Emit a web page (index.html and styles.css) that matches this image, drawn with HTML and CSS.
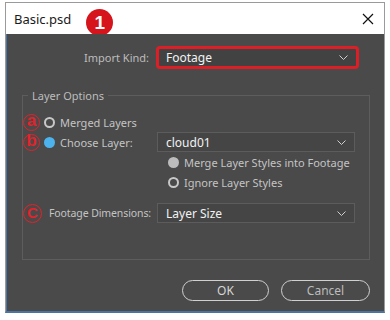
FILE: index.html
```html
<!DOCTYPE html>
<html lang="en">
<head>
    <meta charset="UTF-8">
    <meta name="viewport" content="width=device-width, initial-scale=1.0">
    <title>Basic.psd</title>
    <link rel="stylesheet" href="styles.css">
</head>
<body>
    <div class="window">
        <div class="titlebar">
            <span class="title">Basic.psd</span>
            <span class="step">1</span>
            <span class="close">
                <svg width="12" height="12" viewBox="0 0 12 12">
                    <path d="M1 1 L11 11 M11 1 L1 11" stroke="#111" stroke-width="1.2" fill="none"/>
                </svg>
            </span>
        </div>

        <div class="content">
            <div class="kind-row">
                <span class="kind-label">Import Kind:</span>
                <div class="select select-kind">
                    <span>Footage</span>
                    <svg class="chev" width="9" height="5" viewBox="0 0 9 5"><polyline points="0.5,0.5 4.5,4.5 8.5,0.5" fill="none" stroke="#cfcfcf" stroke-width="1"/></svg>
                </div>
            </div>

            <fieldset class="group">
                <legend>Layer Options</legend>

                <div class="row">
                    <span class="mark">a</span>
                    <span class="radio"></span>
                    <span class="text">Merged Layers</span>
                </div>

                <div class="row row-select">
                    <div class="row-left">
                        <span class="mark">b</span>
                        <span class="radio radio-on"></span>
                        <span class="text">Choose Layer:</span>
                    </div>
                    <div class="select">
                        <span>cloud01</span>
                        <svg class="chev" width="9" height="5" viewBox="0 0 9 5"><polyline points="0.5,0.5 4.5,4.5 8.5,0.5" fill="none" stroke="#cfcfcf" stroke-width="1"/></svg>
                    </div>
                </div>

                <div class="row sub">
                    <span class="radio radio-off"></span>
                    <span class="text">Merge Layer Styles into Footage</span>
                </div>
                <div class="row sub">
                    <span class="radio"></span>
                    <span class="text">Ignore Layer Styles</span>
                </div>

                <div class="row row-select row-dim">
                    <div class="row-left">
                        <span class="mark mark-c">C</span>
                        <span class="text text-dim">Footage Dimensions:</span>
                    </div>
                    <div class="select">
                        <span>Layer Size</span>
                        <svg class="chev" width="9" height="5" viewBox="0 0 9 5"><polyline points="0.5,0.5 4.5,4.5 8.5,0.5" fill="none" stroke="#cfcfcf" stroke-width="1"/></svg>
                    </div>
                </div>
            </fieldset>

            <div class="buttons">
                <button class="btn btn-ok">OK</button>
                <button class="btn btn-cancel">Cancel</button>
            </div>
        </div>
    </div>
</body>
</html>
```

FILE: styles.css
```css
body {
    margin: 0;
    padding: 0;
    background: #ffffff;
    font-family: 'Noto Sans', 'Open Sans', sans-serif;
    font-size: 11px;
}

.window {
    margin: 2px 0 0 5px;
    width: 380px;
    height: 311px;
    box-sizing: border-box;
    border: 1px solid #9a9a9a;
    border-bottom: 2px solid #4b74a2;
    display: flex;
    flex-direction: column;
}

.titlebar {
    height: 31px;
    background: #ffffff;
    display: flex;
    align-items: center;
    padding-left: 8px;
}

.title {
    font-family: 'Noto Sans', sans-serif;
    font-size: 13px;
    color: #1a1a1a;
}

.step {
    width: 27px;
    height: 27px;
    border-radius: 50%;
    background: #d6141c;
    color: #ffffff;
    font-family: 'Liberation Sans', sans-serif;
    font-weight: bold;
    font-size: 19px;
    display: flex;
    align-items: center;
    justify-content: center;
    margin-left: 15px;
    margin-top: 8px;
}

.close {
    margin-left: auto;
    margin-right: 10px;
    display: flex;
}

.content {
    flex: 1;
    background: #4a4a4a;
    border-left: 1px solid #4b74a2;
    padding: 12px 14px 0 15px;
    color: #c4c4c4;
}

.kind-row {
    display: flex;
    align-items: center;
}

.kind-label {
    width: 127px;
    text-align: right;
    margin-right: 7px;
    color: #bdbdbd;
}

.select {
    height: 20px;
    box-sizing: border-box;
    border: 1px solid #5c5c5c;
    background: #454545;
    display: flex;
    align-items: center;
    padding: 0 8px 0 8px;
    color: #f2f2f2;
    font-size: 12px;
}

.select span {
    flex: 1;
}

.select-kind {
    width: 203px;
    height: 23px;
    border: 3px solid #dc1f26;
    border-radius: 4px;
    background: #424242;
    padding-left: 7px;
}

.group {
    margin: 19px 0 0 0;
    padding: 9px 0 36px 0;
    border: 1px solid #5d5d5d;
    min-width: 0;
}

.group legend {
    padding: 0 4px;
    margin-left: 5px;
    color: #bdbdbd;
}

.row {
    display: flex;
    align-items: center;
    height: 20px;
}

.row-select {
    display: grid;
    grid-template-columns: 134px 198px;
    align-items: center;
}

.row-left {
    display: flex;
    align-items: center;
    white-space: nowrap;
}

.row-dim {
    margin-top: 11px;
}

.mark {
    width: 17px;
    height: 17px;
    box-sizing: border-box;
    border: 1.5px solid #e3222a;
    border-radius: 50%;
    color: #e3222a;
    font-family: 'Liberation Sans', sans-serif;
    font-size: 17px;
    font-weight: bold;
    line-height: 12px;
    text-align: center;
    flex-shrink: 0;
}

.mark-c {
    width: 19px;
    height: 19px;
    font-size: 15px;
    line-height: 16px;
}

.radio {
    width: 11px;
    height: 11px;
    box-sizing: border-box;
    border: 2px solid #c8c8c8;
    border-radius: 50%;
    margin-left: 4px;
    flex-shrink: 0;
}

.radio-on {
    border: none;
    background: #4cb3ee;
}

.radio-off {
    border: none;
    background: #bcbcbc;
}

.text {
    margin-left: 5px;
    color: #c4c4c4;
}

.text-dim {
    margin-left: 7px;
    font-size: 10.5px;
    letter-spacing: -0.1px;
}

.sub {
    padding-left: 141px;
}

.buttons {
    display: flex;
    justify-content: flex-end;
    gap: 12px;
    margin-top: 20px;
}

.btn {
    height: 21px;
    border: 1.5px solid #d0d0d0;
    border-radius: 11px;
    background: transparent;
    color: #d6d6d6;
    font-family: 'Noto Sans', sans-serif;
    font-size: 12px;
    padding: 0;
}

.btn-ok {
    width: 87px;
}

.btn-cancel {
    width: 89px;
    color: #bcbcbc;
}
```
